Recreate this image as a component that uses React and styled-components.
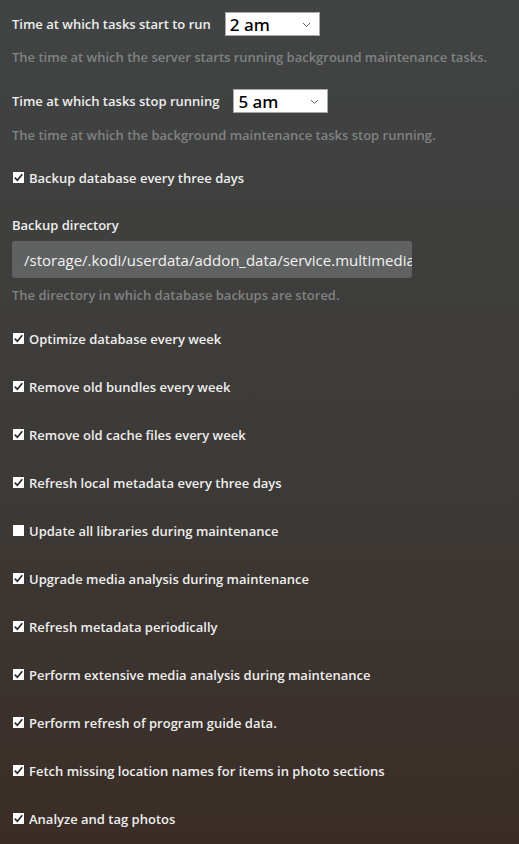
import React from 'react';
import styled, { createGlobalStyle } from 'styled-components';

const GlobalStyle = createGlobalStyle`
  html, body {
    margin: 0;
    padding: 0;
    min-height: 100%;
  }
  body {
    background: linear-gradient(180deg, #414444 0%, #3d3a37 55%, #3a2d26 100%);
    font-family: "Open Sans", "Liberation Sans", sans-serif;
  }
`;

const Page = styled.div`
  display: flex;
  flex-direction: column;
  padding: 12px 12px 0 12px;
  min-height: 844px;
  box-sizing: border-box;
`;

const SelectRow = styled.div`
  display: flex;
  flex-direction: row;
  align-items: center;
  gap: 14px;
  margin-top: ${p => p.$top || 0}px;
`;

const Label = styled.label`
  color: #eeeeee;
  font-size: 13px;
  font-weight: 600;
  line-height: 18px;
  margin-top: ${p => p.$top || 0}px;
`;

const SelectBox = styled.div`
  position: relative;
  width: ${p => p.$width}px;
  height: 24px;
  box-sizing: border-box;
  background: #ffffff;
  border: 1px solid #a9a9a9;
  display: flex;
  align-items: center;
  padding-left: 4px;
  color: #000;
  font-family: "Noto Sans", "Open Sans", sans-serif;
  font-size: 17px;
  font-weight: 500;

  svg {
    position: absolute;
    right: 8px;
    top: 9px;
  }
`;

const Help = styled.div`
  color: #7f8282;
  font-size: 13px;
  font-weight: 600;
  line-height: 18px;
  margin-top: ${p => p.$top || 0}px;
`;

const Input = styled.div`
  width: 400px;
  height: 37px;
  box-sizing: border-box;
  background: #606262;
  border-radius: 3px;
  color: #f2f2f2;
  font-size: 15px;
  font-weight: 400;
  display: flex;
  align-items: center;
  padding-left: 12px;
  white-space: nowrap;
  overflow: hidden;
  margin-top: 7px;
`;

const CheckRow = styled.div`
  display: flex;
  flex-direction: row;
  align-items: center;
  gap: 5px;
  color: #eeeeee;
  font-size: 13px;
  font-weight: 600;
  line-height: 18px;
  margin-top: ${p => p.$top || 0}px;
`;

const Box = styled.span`
  width: 11px;
  height: 11px;
  background: #ffffff;
  margin-left: 1px;
  margin-top: -2px;
  display: flex;
  align-items: center;
  justify-content: center;
  flex-shrink: 0;
`;

const Chevron = () => (
  <svg width="9" height="6" viewBox="0 0 9 6">
    <path d="M1 1 L4.5 4.5 L8 1" fill="none" stroke="#666" strokeWidth="1" />
  </svg>
);

const Check = ({ checked, children, top }) => (
  <CheckRow $top={top}>
    <Box>
      {checked && (
        <svg width="11" height="11" viewBox="0 0 11 11">
          <path d="M1.8 5.6 L4.3 8.2 L9.3 2.2" fill="none" stroke="#222" strokeWidth="1.6" />
        </svg>
      )}
    </Box>
    <span>{children}</span>
  </CheckRow>
);

const tasks = [
  ['Optimize database every week', true],
  ['Remove old bundles every week', true],
  ['Remove old cache files every week', true],
  ['Refresh local metadata every three days', true],
  ['Update all libraries during maintenance', false],
  ['Upgrade media analysis during maintenance', true],
  ['Refresh metadata periodically', true],
  ['Perform extensive media analysis during maintenance', true],
  ['Perform refresh of program guide data.', true],
  ['Fetch missing location names for items in photo sections', true],
  ['Analyze and tag photos', true],
];

export default function App() {
  return (
    <Page>
      <GlobalStyle />
      <SelectRow>
        <Label>Time at which tasks start to run</Label>
        <SelectBox $width={95}>2 am<Chevron /></SelectBox>
      </SelectRow>
      <Help $top={12}>The time at which the server starts running background maintenance tasks.</Help>

      <SelectRow $top={23}>
        <Label>Time at which tasks stop running</Label>
        <SelectBox $width={95}>5 am<Chevron /></SelectBox>
      </SelectRow>
      <Help $top={13}>The time at which the background maintenance tasks stop running.</Help>

      <Check checked top={25}>Backup database every three days</Check>

      <Label $top={29}>Backup directory</Label>
      <Input>/storage/.kodi/userdata/addon_data/service.multimedia.plex/Library</Input>
      <Help $top={8}>The directory in which database backups are stored.</Help>

      {tasks.map(([text, checked], i) => (
        <Check key={text} checked={checked} top={i === 0 ? 26 : 30}>{text}</Check>
      ))}
    </Page>
  );
}
